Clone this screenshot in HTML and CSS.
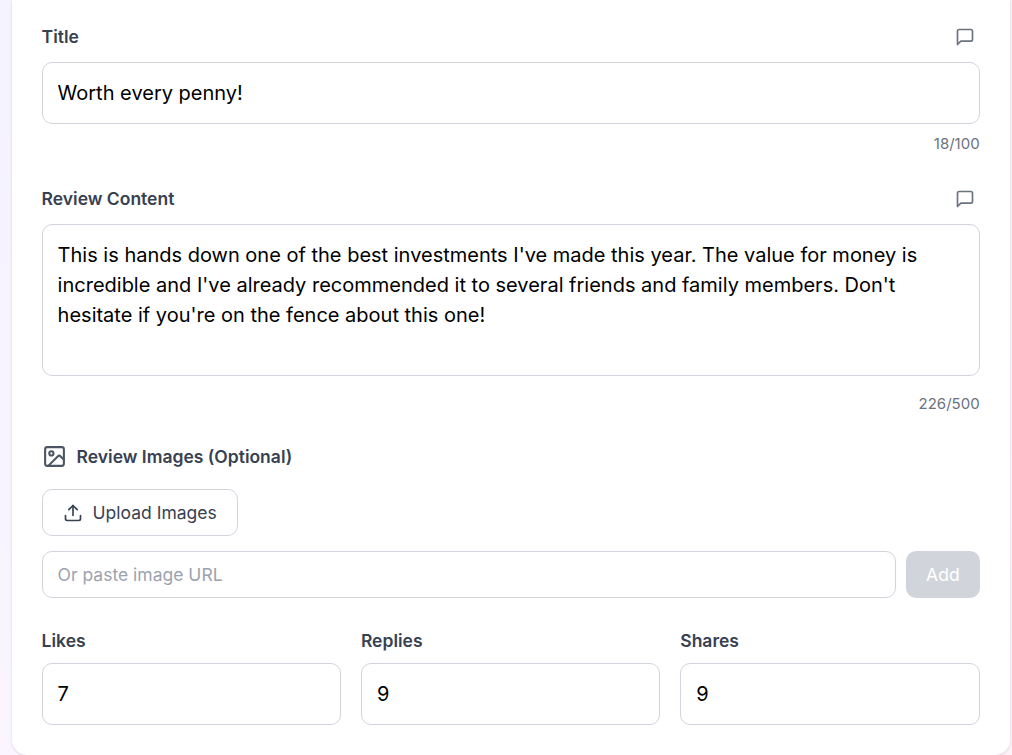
FILE: index.html
```html
<!DOCTYPE html>
<html lang="en">
<head>
    <meta charset="UTF-8">
    <meta name="viewport" content="width=device-width, initial-scale=1.0">
    <title>Review Generator</title>
    <link rel="stylesheet" href="styles.css">
</head>
<body>
    <form class="card">
        <div class="field">
            <div class="field-header">
                <label for="title">Title</label>
                <button type="button" class="icon-btn" aria-label="Title suggestions">
                    <svg class="icon" viewBox="0 0 24 24"><path d="M21 15a2 2 0 0 1-2 2H7l-4 4V5a2 2 0 0 1 2-2h14a2 2 0 0 1 2 2z"/></svg>
                </button>
            </div>
            <input type="text" id="title" class="input" value="Worth every penny!">
            <div class="counter">18/100</div>
        </div>

        <div class="field">
            <div class="field-header">
                <label for="content">Review Content</label>
                <button type="button" class="icon-btn" aria-label="Content suggestions">
                    <svg class="icon" viewBox="0 0 24 24"><path d="M21 15a2 2 0 0 1-2 2H7l-4 4V5a2 2 0 0 1 2-2h14a2 2 0 0 1 2 2z"/></svg>
                </button>
            </div>
            <textarea id="content" class="input textarea">This is hands down one of the best investments I've made this year. The value for money is incredible and I've already recommended it to several friends and family members. Don't hesitate if you're on the fence about this one!</textarea>
            <div class="counter counter-content">226/500</div>
        </div>

        <div class="field images">
            <div class="images-header">
                <svg class="icon icon-lg" viewBox="0 0 24 24"><rect x="3" y="3" width="18" height="18" rx="2"/><circle cx="9" cy="9" r="2"/><path d="M21 15l-3.086-3.086a2 2 0 0 0-2.828 0L6 21"/></svg>
                <label for="imageUrl">Review Images (Optional)</label>
            </div>
            <button type="button" class="upload-btn">
                <svg class="icon" viewBox="0 0 24 24"><path d="M21 15v4a2 2 0 0 1-2 2H5a2 2 0 0 1-2-2v-4"/><polyline points="17 8 12 3 7 8"/><line x1="12" y1="3" x2="12" y2="15"/></svg>
                Upload Images
            </button>
            <div class="url-row">
                <input type="text" id="imageUrl" class="input url-input" placeholder="Or paste image URL">
                <button type="button" class="add-btn" disabled>Add</button>
            </div>
        </div>

        <div class="stats">
            <div class="stat">
                <label for="likes">Likes</label>
                <input type="text" id="likes" class="input" value="7">
            </div>
            <div class="stat">
                <label for="replies">Replies</label>
                <input type="text" id="replies" class="input" value="9">
            </div>
            <div class="stat">
                <label for="shares">Shares</label>
                <input type="text" id="shares" class="input" value="9">
            </div>
        </div>
    </form>
</body>
</html>
```
FILE: styles.css
```css
* {
    box-sizing: border-box;
}

body {
    font-family: 'Inter', sans-serif;
    background: linear-gradient(165deg, #f5f3ff, #faf5ff 75%, #fdf2f8);
    margin: 0;
    height: 755px;
    padding: 0 2.4px 0 11.6px;
    overflow: hidden;
}

button,
input,
textarea {
    font-family: inherit;
    margin: 0;
}

.card {
    background-color: #ffffff;
    height: 755px;
    padding: 22px 30px 30px;
    border-radius: 0 0 15px 15px;
    box-shadow: 0 1px 3px rgba(0, 0, 0, 0.12);
    display: flex;
    flex-direction: column;
    gap: 30px;
}

.field-header {
    display: flex;
    justify-content: space-between;
    align-items: center;
    height: 30px;
    margin-bottom: 10px;
}

label {
    display: block;
    color: #374151;
    font-size: 17.5px;
    font-weight: 600;
    line-height: 25px;
}

.field-header label {
    line-height: 24px;
}

.icon {
    width: 20px;
    height: 20px;
    display: block;
    flex-shrink: 0;
    fill: none;
    stroke: currentColor;
    stroke-width: 2;
    stroke-linecap: round;
    stroke-linejoin: round;
}

.icon-lg {
    width: 25px;
    height: 25px;
}

.icon-btn {
    background: none;
    border: none;
    padding: 5px;
    color: #6b7280;
    cursor: pointer;
}

.input {
    display: block;
    width: 100%;
    height: 62px;
    padding: 15px;
    border: 1px solid #d1d5db;
    border-radius: 10px;
    background-color: #ffffff;
    color: #000000;
    font-size: 20px;
    line-height: 30px;
}

.input:focus {
    outline: none;
    border-color: #8b5cf6;
}

.textarea {
    height: 152px;
    resize: none;
}

.counter {
    margin-top: 10px;
    color: #6b7280;
    font-size: 15px;
    line-height: 20px;
    text-align: right;
}

.counter-content {
    margin-top: 18px;
}

.images-header {
    display: flex;
    align-items: center;
    gap: 10px;
    margin-bottom: 20px;
    color: #4b5563;
}

.upload-btn {
    display: flex;
    align-items: center;
    gap: 10px;
    height: 47px;
    padding: 0 20px;
    margin-bottom: 15px;
    border: 1px solid #d1d5db;
    border-radius: 10px;
    background-color: #ffffff;
    color: #374151;
    font-size: 17.5px;
    line-height: 25px;
    cursor: pointer;
}

.url-row {
    display: flex;
    gap: 10px;
}

.url-input {
    flex: 1;
    height: 47px;
    padding: 10px 15px;
    font-size: 17.5px;
    line-height: 25px;
}

.url-input::placeholder {
    color: #9ca3af;
}

.add-btn {
    height: 47px;
    padding: 0 20px;
    border: none;
    border-radius: 10px;
    background-color: #d1d5db;
    color: #ffffff;
    font-size: 17.5px;
}

.stats {
    display: grid;
    grid-template-columns: repeat(3, 1fr);
    gap: 20px;
}

.stat label {
    margin-bottom: 10px;
}
```
